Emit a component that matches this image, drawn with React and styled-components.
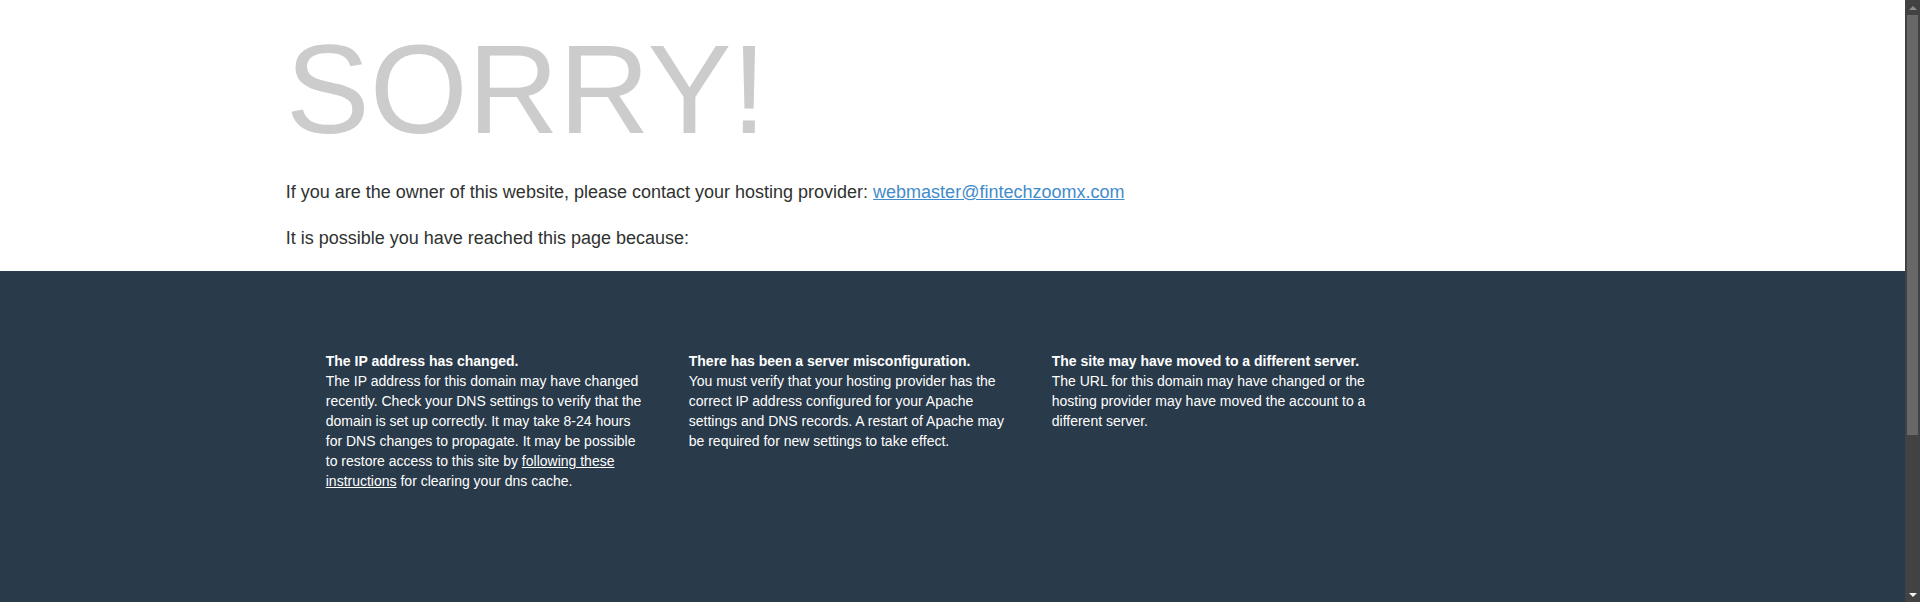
import React from "react";
import styled, { createGlobalStyle } from "styled-components";

const GlobalStyle = createGlobalStyle`
  html, body {
    margin: 0;
    padding: 0;
  }
  body {
    font-family: "Liberation Sans", Arial, Helvetica, sans-serif;
    font-size: 14px;
    line-height: 1.428571429;
    background-color: #ffffff;
    color: #2f3230;
  }
`;

const Page = styled.div`
  width: calc(100% - 15px);
`;

const Container = styled.section`
  width: 70%;
  margin: 0 auto;
  padding: 0;
`;

const ResponseInfo = styled.div`
  color: #cccccc;
`;

const StatusCode = styled.span`
  font-size: 900%;
`;

const Lead = styled.p`
  font-size: 18px;
  margin: ${(p) => (p.$first ? "0 0 20px" : "20px 0")};
  color: #2f3230;

  a {
    color: #428bca;
    text-decoration: underline;
  }
`;

const AdditionalInfo = styled.section`
  background-color: #293a4a;
  color: #ffffff;
  min-height: 549px;
  box-sizing: border-box;
`;

const Items = styled.div`
  width: 70%;
  margin: 0 auto;
  padding: 80px 20px 20px;
  box-sizing: border-box;
`;

const ReasonList = styled.ul`
  display: grid;
  grid-template-columns: repeat(3, 363px);
  list-style: none;
  margin: 0;
  padding: 0;
`;

const Reason = styled.li`
  padding: 0 20px;
  text-align: left;
`;

const Heading = styled.div`
  font-weight: bold;
`;

const Content = styled.div`
  a {
    color: #ffffff;
    text-decoration: underline;
  }
`;

/* window scrollbar, drawn over the right edge */
const ScrollRail = styled.div`
  position: fixed;
  top: 0;
  right: 0;
  width: 15px;
  height: 100vh;
  background: #424242;
  display: flex;
  flex-direction: column;
`;

const ScrollArrow = styled.div`
  height: 15px;
  flex: none;
  display: flex;
  align-items: center;
  justify-content: center;

  &::before {
    content: "";
    width: 0;
    height: 0;
    border-left: 4px solid transparent;
    border-right: 4px solid transparent;
    ${(p) =>
      p.$down
        ? "border-top: 4px solid #f2f2f2;"
        : "border-bottom: 4px solid #8c8c8c;"}
  }
`;

const ScrollTrack = styled.div`
  flex: 1;
  padding: 0 2px;
`;

const ScrollThumb = styled.div`
  height: 420px;
  background: #686868;
`;

const reasons = [
  {
    title: "The IP address has changed.",
    body: (
      <>
        The IP address for this domain may have changed recently. Check your DNS
        settings to verify that the domain is set up correctly. It may take 8-24
        hours for DNS changes to propagate. It may be possible to restore access
        to this site by <a href="#">following these instructions</a> for clearing
        your dns cache.
      </>
    ),
  },
  {
    title: "There has been a server misconfiguration.",
    body: (
      <>
        You must verify that your hosting provider has the correct IP address
        configured for your Apache settings and DNS records. A restart of Apache
        may be required for new settings to take effect.
      </>
    ),
  },
  {
    title: "The site may have moved to a different server.",
    body: (
      <>
        The URL for this domain may have changed or the hosting provider may have
        moved the account to a different server.
      </>
    ),
  },
];

export default function App() {
  return (
    <>
      <GlobalStyle />
      <Page>
        <Container>
          <ResponseInfo>
            <StatusCode>SORRY!</StatusCode>
          </ResponseInfo>
          <Lead $first>
            If you are the owner of this website, please contact your hosting provider:{" "}
            <a href="#">webmaster@fintechzoomx.com</a>
          </Lead>
          <Lead>It is possible you have reached this page because:</Lead>
        </Container>
        <AdditionalInfo>
          <Items>
            <ReasonList>
              {reasons.map((r) => (
                <Reason key={r.title}>
                  <Heading>{r.title}</Heading>
                  <Content>{r.body}</Content>
                </Reason>
              ))}
            </ReasonList>
          </Items>
        </AdditionalInfo>
      </Page>
      <ScrollRail>
        <ScrollArrow />
        <ScrollTrack>
          <ScrollThumb />
        </ScrollTrack>
        <ScrollArrow $down />
      </ScrollRail>
    </>
  );
}
